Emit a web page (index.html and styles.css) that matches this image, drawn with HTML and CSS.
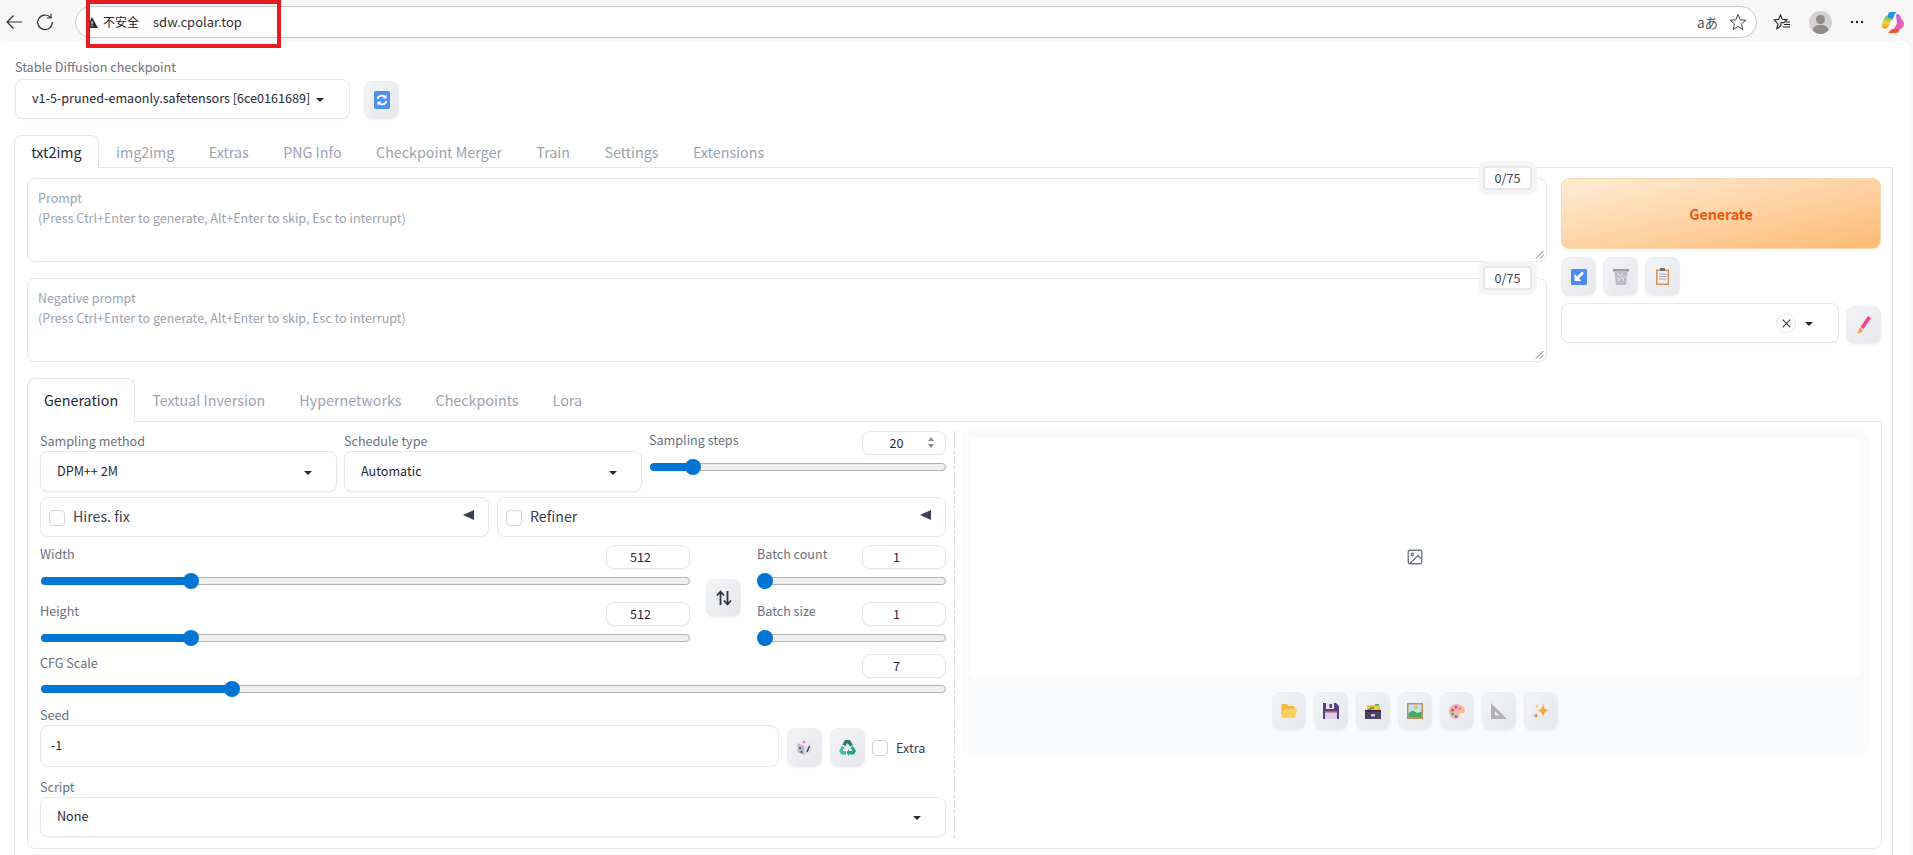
FILE: index.html
```html
<!DOCTYPE html>
<html lang="en">
<head>
    <meta charset="UTF-8">
    <meta name="viewport" content="width=device-width, initial-scale=1.0">
    <link rel="stylesheet" href="styles.css">
    <title>Stable Diffusion</title>
</head>
<body>
    <!-- browser chrome -->
    <div class="browser-bar">
        <svg class="nav-icon" width="18" height="18" viewBox="0 0 18 18"><path d="M17 9H2M8.500 2.500 2 9l6.500 6.500" fill="none" stroke="#333" stroke-width="1.200"/></svg>
        <svg class="nav-icon reload" width="18" height="18" viewBox="0 0 18 18"><path d="M14.500 4.500A7.300 7.300 0 1 0 16.300 9M15 1v4h-4" fill="none" stroke="#333" stroke-width="1.200"/></svg>
        <div class="address">
            <svg class="warn" width="12" height="11" viewBox="0 0 12 11"><path d="M6 0 12 11H0Z" fill="#333"/><path d="M5.500 4h1v3.500h-1zM5.500 8.300h1v1h-1z" fill="#fff"/></svg>
            <span class="insecure">不安全</span>
            <span class="url">sdw.cpolar.top</span>
            <span class="translate">aあ</span>
            <svg width="18" height="18" viewBox="0 0 18 18"><path d="M9 1.500 11.200 6.800 16.900 7.200 12.500 10.900 13.900 16.500 9 13.500 4.100 16.500 5.500 10.900 1.100 7.200 6.800 6.800Z" fill="none" stroke="#444" stroke-width="1"/></svg>
        </div>
        <div class="browser-actions">
            <svg width="18" height="18" viewBox="0 0 18 18"><path d="M7.500 2 9.300 6.200 14 6.600 10.500 9.600 8 9.800 7.800 13 3.800 15.500 5 10.800 1.300 7 5.800 6.300Z" fill="none" stroke="#222" stroke-width="1.100"/><path d="M11 11.500h6M10 14h7M12.500 9h4.500" stroke="#222" stroke-width="1"/></svg>
            <svg width="23" height="23" viewBox="0 0 23 23"><circle cx="11.500" cy="11.500" r="11.500" fill="#d2d1cf"/><circle cx="11.500" cy="8.500" r="4.500" fill="#8f8c88"/><path d="M3.500 19c1-4 4-5 8-5s7 1 8 5c-2 2.500-5 4-8 4s-6-1.500-8-4Z" fill="#8f8c88"/></svg>
            <svg width="14" height="4" viewBox="0 0 14 4"><circle cx="2" cy="2" r="1.200" fill="#222"/><circle cx="7" cy="2" r="1.200" fill="#222"/><circle cx="12" cy="2" r="1.200" fill="#222"/></svg>
            <svg width="22" height="21" viewBox="0 0 22 21">
                <defs>
                    <linearGradient id="copA" x1="0" y1="0" x2="1" y2="1"><stop offset="0" stop-color="#1fb6e8"/><stop offset="1" stop-color="#2b5ce0"/></linearGradient>
                    <linearGradient id="copB" x1="0" y1="0" x2="0" y2="1"><stop offset="0" stop-color="#3cc46a"/><stop offset="0.6" stop-color="#f4d23c"/><stop offset="1" stop-color="#f58a2a"/></linearGradient>
                    <linearGradient id="copC" x1="0" y1="0" x2="1" y2="1"><stop offset="0" stop-color="#c45fe8"/><stop offset="1" stop-color="#f0629e"/></linearGradient>
                </defs>
                <path d="M7 0H16.500C13.500 0 12.800 2 12 4L10 8H4Z" fill="url(#copA)"/>
                <path d="M5 3C2 6 0 10 0 13.500 0 16 2 17 4 16.500 6 16 7 14 8 11L10 6H6Z" fill="url(#copB)"/>
                <path d="M14 3C16 1 17.500 2 18.500 5L22 11C22 15 20 17 17 17H12L15 11Z" fill="url(#copC)"/>
                <path d="M6 21H14C16 21 17 19 18 17H11C9 17 8.500 19 6 21Z" fill="#f2552c"/>
            </svg>
        </div>
    </div>
    <div class="url-highlight"></div>

    <div class="page">
        <div class="label checkpoint-label">Stable Diffusion checkpoint</div>
        <div class="checkpoint-row">
            <div class="dropdown checkpoint-select">
                <span>v1-5-pruned-emaonly.safetensors [6ce0161689]</span>
                <i class="caret"></i>
            </div>
            <button class="tool-btn refresh-btn">
                <svg width="16" height="18" viewBox="0 0 16 18"><rect width="16" height="18" rx="2" fill="#4a90f0"/><path d="M3.500 8A4.500 4.500 0 0 1 11.500 6.500M12.500 10A4.500 4.500 0 0 1 4.500 11.500" fill="none" stroke="#fff" stroke-width="1.800"/><path d="M12.500 3.500v4h-4zM3.500 14.500v-4h4z" fill="#fff"/></svg>
            </button>
        </div>

        <div class="tabs main-tabs">
            <div class="tab active">txt2img</div>
            <div class="tab">img2img</div>
            <div class="tab">Extras</div>
            <div class="tab">PNG Info</div>
            <div class="tab">Checkpoint Merger</div>
            <div class="tab">Train</div>
            <div class="tab">Settings</div>
            <div class="tab">Extensions</div>
        </div>

        <div class="main-panel">
            <div class="prompt-row">
                <div class="prompts">
                    <div class="prompt-box">
                        <div class="counter">0/75</div>
                        <div class="prompt-title">Prompt</div>
                        <div class="prompt-hint">(Press Ctrl+Enter to generate, Alt+Enter to skip, Esc to interrupt)</div>
                        <svg class="grip" width="9" height="9" viewBox="0 0 9 9"><path d="M8.500 1 1 8.500M8.500 5 5 8.500" stroke="#777" stroke-width="1"/></svg>
                    </div>
                    <div class="prompt-box">
                        <div class="counter">0/75</div>
                        <div class="prompt-title">Negative prompt</div>
                        <div class="prompt-hint">(Press Ctrl+Enter to generate, Alt+Enter to skip, Esc to interrupt)</div>
                        <svg class="grip" width="9" height="9" viewBox="0 0 9 9"><path d="M8.500 1 1 8.500M8.500 5 5 8.500" stroke="#777" stroke-width="1"/></svg>
                    </div>
                </div>
                <div class="actions">
                    <button class="generate-btn">Generate</button>
                    <div class="action-tools">
                        <button class="tool-btn small-tool">
                            <svg width="16" height="16" viewBox="0 0 16 16"><rect width="16" height="16" rx="1.500" fill="#4a8cf0"/><path d="M13 4.500 8 9.500l2.500 2.500H3.500V5L6 7.500 11 2.500Z" fill="#fff"/></svg>
                        </button>
                        <button class="tool-btn small-tool">
                            <svg width="16" height="17" viewBox="0 0 16 17"><path d="M0 1h16v2.500H0z" fill="#9a98a2"/><path d="M1.500 3.500h13L13 17H3Z" fill="#bdbbc4"/><path d="M4 5l3 3 3-3M5 13l3-4 3 4M4 9l2 3M12 8l-2 3" fill="none" stroke="#e6e5ea" stroke-width="1"/></svg>
                        </button>
                        <button class="tool-btn small-tool">
                            <svg width="13" height="17" viewBox="0 0 13 17"><rect y="1.500" width="13" height="15.500" fill="#d9925a"/><rect x="1.500" y="3" width="10" height="12.500" fill="#f1eff2"/><rect x="4" width="5" height="3" fill="#6d6a78"/><path d="M3 6h7M3 8.500h7M3 11h7" stroke="#a9a6b4" stroke-width="1"/></svg>
                        </button>
                    </div>
                    <div class="style-row">
                        <div class="dropdown style-select">
                            <span class="clear-x">
                                <svg width="9" height="9" viewBox="0 0 9 9"><path d="M.7.7l7.600 7.600M8.300.7.7 8.300" stroke="#333" stroke-width="1.100"/></svg>
                            </span>
                            <i class="caret"></i>
                        </div>
                        <button class="tool-btn pencil-btn">
                            <svg width="14" height="18" viewBox="0 0 14 18"><path d="M11 0 14 2 6.500 13 3.500 11Z" fill="#f0438c"/><path d="M3 11.500 6 13.500C5.500 16.500 3 17.500 0 17.500 1.500 16 1.500 13 3 11.500Z" fill="#f2a65a"/></svg>
                        </button>
                    </div>
                </div>
            </div>

            <div class="tabs sub-tabs">
                <div class="tab active">Generation</div>
                <div class="tab">Textual Inversion</div>
                <div class="tab">Hypernetworks</div>
                <div class="tab">Checkpoints</div>
                <div class="tab">Lora</div>
            </div>

            <div class="gen-panel">
                <div class="settings">
                    <div class="sampler-row">
                        <div>
                            <div class="label field-label">Sampling method</div>
                            <div class="dropdown"><span>DPM++ 2M</span><i class="caret"></i></div>
                        </div>
                        <div>
                            <div class="label field-label">Schedule type</div>
                            <div class="dropdown"><span>Automatic</span><i class="caret"></i></div>
                        </div>
                        <div>
                            <div class="slider-head">
                                <span class="label">Sampling steps</span>
                                <div class="number steps-number">20
                                    <span class="spinner"><i class="spin-up"></i><i class="spin-down"></i></span>
                                </div>
                            </div>
                            <div class="slider"><div class="fill" style="width: 12.2%"></div><i class="thumb"></i><div class="rest"></div></div>
                        </div>
                    </div>

                    <div class="accordions">
                        <div class="accordion"><i class="checkbox"></i><span>Hires. fix</span><i class="collapse-arrow"></i></div>
                        <div class="accordion"><i class="checkbox"></i><span>Refiner</span><i class="collapse-arrow"></i></div>
                    </div>

                    <div class="dims">
                        <div class="dims-col size-col">
                            <div class="slider-field">
                                <div class="slider-head"><span class="label">Width</span><div class="number">512</div></div>
                                <div class="slider"><div class="fill" style="width: 22%"></div><i class="thumb"></i><div class="rest"></div></div>
                            </div>
                            <div class="slider-field">
                                <div class="slider-head"><span class="label">Height</span><div class="number">512</div></div>
                                <div class="slider"><div class="fill" style="width: 22%"></div><i class="thumb"></i><div class="rest"></div></div>
                            </div>
                        </div>
                        <button class="tool-btn swap-btn">
                            <svg width="16" height="16" viewBox="0 0 16 16"><path d="M4.500 15V2M1 5.500 4.500 1.500 8 5.500M11.500 1v13M8 10.500l3.500 4 3.500-4" fill="none" stroke="#2b3648" stroke-width="1.800"/></svg>
                        </button>
                        <div class="dims-col batch-col">
                            <div class="slider-field">
                                <div class="slider-head"><span class="label">Batch count</span><div class="number">1</div></div>
                                <div class="slider"><div class="fill" style="width: 0"></div><i class="thumb"></i><div class="rest"></div></div>
                            </div>
                            <div class="slider-field">
                                <div class="slider-head"><span class="label">Batch size</span><div class="number">1</div></div>
                                <div class="slider"><div class="fill" style="width: 0"></div><i class="thumb"></i><div class="rest"></div></div>
                            </div>
                        </div>
                    </div>

                    <div class="cfg-field">
                        <div class="slider-head"><span class="label">CFG Scale</span><div class="number">7</div></div>
                        <div class="slider"><div class="fill" style="width: 20.300%"></div><i class="thumb"></i><div class="rest"></div></div>
                    </div>

                    <div class="label field-label seed-label">Seed</div>
                    <div class="seed-row">
                        <div class="seed-input">-1</div>
                        <button class="tool-btn seed-btn">
                            <svg width="17" height="17" viewBox="0 0 17 17"><path d="M8 1 15.500 4 8.500 7.500 1.500 4Z" fill="#eee9ef"/><path d="M1.500 4 8.500 7.500V16.500L1.500 13Z" fill="#bdb6cc"/><path d="M15.500 4V13L8.500 16.500V7.500Z" fill="#e2dde8"/><circle cx="8" cy="3" r="1.300" fill="#f0709a"/><circle cx="4" cy="9" r="1" fill="#4a3d78"/><circle cx="5.500" cy="13" r="1" fill="#4a3d78"/><path d="M13.500 7 11 13" stroke="#4a3d78" stroke-width="1.400"/></svg>
                        </button>
                        <button class="tool-btn seed-btn">
                            <svg width="17" height="16" viewBox="0 0 17 16"><path d="M6 0h5l3 5-3 1.500L8.500 3 6.500 6 3.500 4.500Z" fill="#2e7d68"/><path d="M3 6 5.500 7.500 3.500 11H7v3.500H2.500L0 11Z" fill="#3fc48e"/><path d="M14 6l3 5-2 3.500H10V16L7.500 12.500 10 9v2h3.500L11.500 7.500Z" fill="#2aa37c"/></svg>
                        </button>
                        <label class="extra"><i class="checkbox"></i><span>Extra</span></label>
                    </div>

                    <div class="label field-label script-label">Script</div>
                    <div class="dropdown script-select"><span>None</span><i class="caret"></i></div>
                </div>

                <div class="gallery">
                    <div class="gallery-image">
                        <svg width="18" height="18" viewBox="0 0 24 24" fill="none" stroke="#6b7280" stroke-width="1.700"><rect x="3" y="3" width="18" height="18" rx="2"/><circle cx="8.500" cy="8.500" r="1.500"/><path d="M21 15l-5-5L5 21"/></svg>
                    </div>
                    <div class="gallery-tools">
                        <button class="tool-btn gallery-btn">
                            <svg width="17" height="14" viewBox="0 0 16 14"><path d="M0 1.500 C0 .5 .5 0 1.500 0H5L7 2H13V5H3L0 13Z" fill="#f5b93c"/><path d="M3 5H16L13 14H0Z" fill="#ffd060"/></svg>
                        </button>
                        <button class="tool-btn gallery-btn">
                            <svg width="16" height="16" viewBox="0 0 16 16"><path d="M0 0H13L16 3V16H0Z" fill="#54407f"/><rect x="3" y="0" width="8" height="6" fill="#e9e5f0"/><rect x="6.500" y="1" width="2.500" height="4" fill="#54407f"/><rect x="2" y="8" width="12" height="8" fill="#d8cfe8"/><rect x="2" y="8" width="12" height="1.500" fill="#e34560"/></svg>
                        </button>
                        <button class="tool-btn gallery-btn">
                            <svg width="16" height="15" viewBox="0 0 16 15"><path d="M2 1H10L11 0 13 1H15V7H2Z" fill="#f5c53c"/><rect x="5" y="3" width="4" height="2" fill="#8a8578"/><rect x="3" y="5" width="3" height="1.500" fill="#e34b3c"/><rect x="10" y="0" width="4" height="1.500" fill="#46b56a"/><rect x="0" y="7" width="16" height="8" fill="#4c4560"/><rect x="0" y="6" width="16" height="1.500" fill="#2c2838"/><rect x="6" y="10" width="4" height="2.500" fill="#cfc8e0"/></svg>
                        </button>
                        <button class="tool-btn gallery-btn">
                            <svg width="16" height="16" viewBox="0 0 16 16"><rect width="16" height="16" fill="#bf8a5c"/><rect x="1.500" y="1.500" width="13" height="13" fill="#bfe4f5"/><path d="M1.500 10 6 7.500 10 10 14.500 8.500V14.500H1.500Z" fill="#46a85c"/><rect x="7.500" y="3" width="3" height="3" fill="#f2b740"/></svg>
                        </button>
                        <button class="tool-btn gallery-btn">
                            <svg width="16" height="15" viewBox="0 0 16 15"><path d="M7 0C12 0 16 3 16 7 16 9.500 13 9 11.500 9 10 9 10.500 11 10.500 12 10.500 14 8.500 15 6.500 15 3 15 0 11.500 0 7.500 0 3.500 3 0 7 0Z" fill="#f5b8a8"/><circle cx="3.500" cy="6" r="1.600" fill="#ea3c78"/><circle cx="7" cy="3" r="1.500" fill="#b54cd8"/><circle cx="11" cy="4.500" r="1.300" fill="#f08a4c"/><circle cx="3.500" cy="10" r="1.500" fill="#3fb08a"/><circle cx="7" cy="12.500" r="1.500" fill="#4c8ce8"/></svg>
                        </button>
                        <button class="tool-btn gallery-btn">
                            <svg width="16" height="16" viewBox="0 0 16 16"><path fill-rule="evenodd" d="M0 0 16 16H0ZM4 8V12.500H8.500Z" fill="#b2b0b8"/></svg>
                        </button>
                        <button class="tool-btn gallery-btn">
                            <svg width="16" height="16" viewBox="0 0 16 16"><path d="M10 0C10.500 5 12 7 16 7.500 12 8 10.500 10 10 15 9.500 10 8 8 4 7.500 8 7 9.500 5 10 0Z" fill="#f9a33c"/><path d="M3 9.500C3.200 11.500 4 12.500 6 12.800 4 13.100 3.200 14 3 16 2.800 14 2 13.100 0 12.800 2 12.500 2.800 11.500 3 9.500Z" fill="#f08a4c"/><path d="M4 1C4.100 2.200 4.800 3 6 3.100 4.800 3.200 4.100 4 4 5.200 3.900 4 3.200 3.200 2 3.100 3.200 3 3.900 2.200 4 1Z" fill="#f5c060"/></svg>
                        </button>
                    </div>
                </div>
            </div>
        </div>
    </div>
</body>
</html>
```

FILE: styles.css
```css
* {
    box-sizing: border-box;
}

body {
    font-family: "Noto Sans CJK SC", "Noto Sans", sans-serif;
    margin: 0;
    width: 1913px;
    height: 855px;
    overflow: hidden;
    background-color: #f7f7f7;
    color: #1f2937;
    font-size: 12.600px;
    position: relative;
}

button {
    padding: 0;
    font-family: inherit;
}

/* browser chrome */
.browser-bar {
    height: 41px;
    display: flex;
    align-items: flex-start;
    padding-top: 6px;
}

.nav-icon {
    margin: 7px 0 0 5px;
    flex: none;
}

.nav-icon.reload {
    margin-left: 13px;
}

.address {
    width: 1682px;
    height: 32px;
    margin-left: 21px;
    background: #fff;
    border: 1px solid #c9c9c9;
    border-radius: 16px;
    display: flex;
    align-items: center;
    padding-left: 10px;
    padding-right: 9px;
    flex: none;
}

.insecure {
    font-size: 12px;
    margin-left: 5px;
    color: #222;
    line-height: 16px;
}

.url {
    font-size: 13px;
    margin-left: 14px;
    color: #333;
    line-height: 18px;
    flex: 1;
}

.translate {
    color: #555;
    font-size: 13.500px;
    line-height: 18px;
    margin-right: 11px;
}

.browser-actions {
    display: flex;
    align-items: center;
    height: 32px;
    margin-left: 16px;
    gap: 18px;
}

.url-highlight {
    position: absolute;
    left: 86px;
    top: 0;
    width: 195px;
    height: 48px;
    border: 4px solid #e81c20;
}

.page {
    height: 814px;
    margin-right: 3px;
    padding: 18px 17px 0 14px;
    background: #fff;
    border-radius: 8px 8px 0 0;
}

/* labels and dropdowns */
.label {
    color: #6b7280;
    font-size: 12.600px;
    line-height: 16px;
}

.checkpoint-label {
    margin-bottom: 4px;
    padding-left: 1px;
}

.checkpoint-row {
    display: flex;
    align-items: flex-end;
    gap: 14px;
    padding-left: 1px;
}

.dropdown {
    height: 41px;
    background: #fff;
    border: 1px solid #e5e7eb;
    border-radius: 8px;
    box-shadow: 0 1px 2px rgba(0, 0, 0, 0.05);
    display: flex;
    align-items: center;
    justify-content: space-between;
    padding: 0 24px 0 16px;
    font-size: 12.600px;
    line-height: 18px;
}

.dropdown span {
    margin-top: -2px;
}

.checkpoint-select {
    width: 335px;
    height: 40px;
    padding-right: 25px;
}

.caret {
    width: 0;
    height: 0;
    border-left: 4px solid transparent;
    border-right: 4px solid transparent;
    border-top: 4px solid #1f2937;
    margin-top: 2px;
}

.tool-btn {
    border: 1px solid #eceef1;
    border-radius: 8px;
    background: linear-gradient(to bottom right, #f3f4f6, #e5e7eb);
    box-shadow: 0 1px 2px rgba(0, 0, 0, 0.05);
    display: flex;
    align-items: center;
    justify-content: center;
    flex: none;
}

.refresh-btn {
    width: 35px;
    height: 38px;
}

/* tabs */
.tabs {
    display: flex;
    height: 32px;
    font-size: 14.300px;
}

.main-tabs {
    margin-top: 16px;
}

.tab {
    padding: 0 16.200px;
    color: #9ca3af;
    line-height: 32px;
    border: 1px solid transparent;
    border-bottom: none;
    border-radius: 8px 8px 0 0;
    height: 33px;
    background: transparent;
}

.tab.active {
    color: #1f2937;
    border-color: #e5e7eb;
    background: #fff;
    position: relative;
    z-index: 1;
}

.main-panel {
    border: 1px solid #e5e7eb;
    border-bottom: none;
    padding: 10px 11px 0 12px;
    height: 690px;
}

/* prompts */
.prompt-row {
    display: flex;
    gap: 14px;
}

.prompts {
    width: 1520px;
    display: flex;
    flex-direction: column;
    gap: 16px;
}

.prompt-box {
    height: 84px;
    border: 1px solid #e5e7eb;
    border-radius: 8px;
    padding: 9px 8px 0 10px;
    position: relative;
    font-size: 12.500px;
    line-height: 20px;
    color: #9ca3af;
}

.counter {
    position: absolute;
    top: -13px;
    right: 14px;
    width: 49px;
    height: 24px;
    line-height: 19px;
    text-align: center;
    color: #374151;
    background: #fff;
    border: 2px solid #e5e7eb;
    border-radius: 4px;
    box-shadow: 0 0 0 5px #f5f5f6;
    font-size: 12.600px;
}

.grip {
    position: absolute;
    right: 2px;
    bottom: 2px;
}

.actions {
    width: 320px;
}

.generate-btn {
    display: block;
    width: 100%;
    height: 71px;
    border: 1px solid #fed7aa;
    border-radius: 8px;
    background: linear-gradient(to bottom right, #ffedd5, #fdba74);
    color: #ea580c;
    font-size: 14.200px;
    font-weight: 600;
}

.action-tools {
    display: flex;
    gap: 7px;
    margin-top: 8px;
}

.small-tool {
    width: 35px;
    height: 39px;
}

.style-row {
    display: flex;
    align-items: flex-end;
    justify-content: space-between;
    margin-top: 7px;
}

.style-select {
    width: 278px;
    height: 40px;
    justify-content: flex-end;
    padding-right: 25px;
    gap: 9px;
}

.dropdown .clear-x {
    width: 20px;
    height: 20px;
    border: 1px solid #e5e7eb;
    border-radius: 50%;
    display: flex;
    align-items: center;
    justify-content: center;
    margin-top: 0;
}

.pencil-btn {
    width: 35px;
    height: 38px;
    margin-bottom: -1px;
}

/* generation tabs */
.sub-tabs {
    margin-top: 16px;
    height: 43px;
}

.sub-tabs .tab {
    height: 44px;
    line-height: 42px;
    padding: 0 16px;
}

.gen-panel {
    border: 1px solid #e5e7eb;
    border-radius: 0 0 8px 8px;
    padding: 9px 12px 10px 12px;
    display: flex;
    width: 1855px;
    height: 428px;
}

.settings {
    width: 915px;
    padding-right: 8px;
    border-right: 1px dashed #d4d6da;
    flex: none;
}

.sampler-row {
    display: grid;
    grid-template-columns: 297px 298px 297px;
    gap: 7px;
}

.field-label {
    height: 20px;
    line-height: 20px;
}

.slider-head {
    display: flex;
    justify-content: space-between;
    align-items: flex-start;
    height: 24px;
}

.slider-head .label {
    margin-top: 1px;
}

.number {
    width: 84px;
    height: 24px;
    border: 1px solid #e5e7eb;
    border-radius: 8px;
    background: #fff;
    box-shadow: 0 1px 2px rgba(0, 0, 0, 0.04);
    text-align: center;
    line-height: 22px;
    font-size: 12.600px;
    color: #1f2937;
    padding-right: 15px;
}

.steps-number {
    position: relative;
}

.spinner {
    position: absolute;
    right: 11px;
    top: 5px;
    display: flex;
    flex-direction: column;
    gap: 3px;
}

.spinner i {
    display: block;
    width: 0;
    height: 0;
    border-left: 3.500px solid transparent;
    border-right: 3.500px solid transparent;
}

.spin-up {
    border-bottom: 4px solid #8a8a8a;
}

.spin-down {
    border-top: 4px solid #8a8a8a;
}

.slider {
    display: flex;
    align-items: center;
    height: 24px;
    padding-left: 1px;
}

.fill {
    height: 8px;
    background: #0075d4;
    border-radius: 4px 0 0 4px;
    flex: none;
}

.thumb {
    width: 16px;
    height: 16px;
    border-radius: 50%;
    background: #0075d4;
    flex: none;
    margin-left: -1px;
    position: relative;
}

.rest {
    flex: 1;
    height: 8px;
    margin-left: -2px;
    background: #efefef;
    border: 1px solid #b2b2b2;
    border-radius: 0 4px 4px 0;
}

.accordions {
    display: flex;
    gap: 8px;
    margin-top: 5px;
}

.accordion {
    width: 449px;
    height: 40px;
    border: 1px solid #e5e7eb;
    border-radius: 8px;
    display: flex;
    align-items: center;
    padding: 0 14px 0 8px;
    font-size: 14.200px;
    color: #374151;
}

.accordion span {
    flex: 1;
    line-height: 20px;
    margin-left: 8px;
    margin-top: -3px;
}

.accordion .checkbox {
    margin-top: 2px;
}

.checkbox {
    width: 16px;
    height: 16px;
    border: 1px solid #d1d5db;
    border-radius: 4px;
    background: #fff;
    flex: none;
    display: block;
}

.collapse-arrow {
    width: 0;
    height: 0;
    border-top: 5.500px solid transparent;
    border-bottom: 5.500px solid transparent;
    border-right: 11px solid #374151;
    margin-top: -4px;
}

.dims {
    display: flex;
    align-items: center;
    margin-top: 8px;
}

.dims-col {
    display: flex;
    flex-direction: column;
    gap: 9px;
}

.size-col {
    width: 650px;
}

.batch-col {
    width: 189px;
}

.swap-btn {
    width: 35px;
    height: 38px;
    margin: 0 16px;
}

.cfg-field {
    margin-top: 4px;
}

.cfg-field .slider {
    height: 22px;
}

.seed-label {
    margin-top: 5px;
}

.seed-row {
    display: flex;
    align-items: flex-end;
    height: 42px;
}

.seed-input {
    width: 739px;
    height: 42px;
    border: 1px solid #e5e7eb;
    border-radius: 8px;
    box-shadow: inset 0 1px 2px rgba(0, 0, 0, 0.05);
    padding-left: 10px;
    line-height: 38px;
    margin-right: 8px;
}

.seed-btn {
    width: 35px;
    height: 39px;
    margin-right: 8px;
}

.extra {
    display: flex;
    align-items: center;
    height: 39px;
    gap: 8px;
    margin-left: -1px;
    color: #374151;
    line-height: 20px;
}

.script-label {
    margin-top: 10px;
}

.script-select {
    height: 40px;
}

/* gallery */
.gallery {
    width: 907px;
    height: 323px;
    margin-left: 7px;
    background: #f9fafb;
    border-radius: 8px;
    padding: 8px 9px 0 8px;
}

.gallery-image {
    height: 236px;
    background: #fff;
    display: flex;
    align-items: center;
    justify-content: center;
}

.gallery-tools {
    display: flex;
    justify-content: center;
    gap: 8px;
    margin-top: 17px;
}

.gallery-btn {
    width: 34px;
    height: 38px;
}
```
